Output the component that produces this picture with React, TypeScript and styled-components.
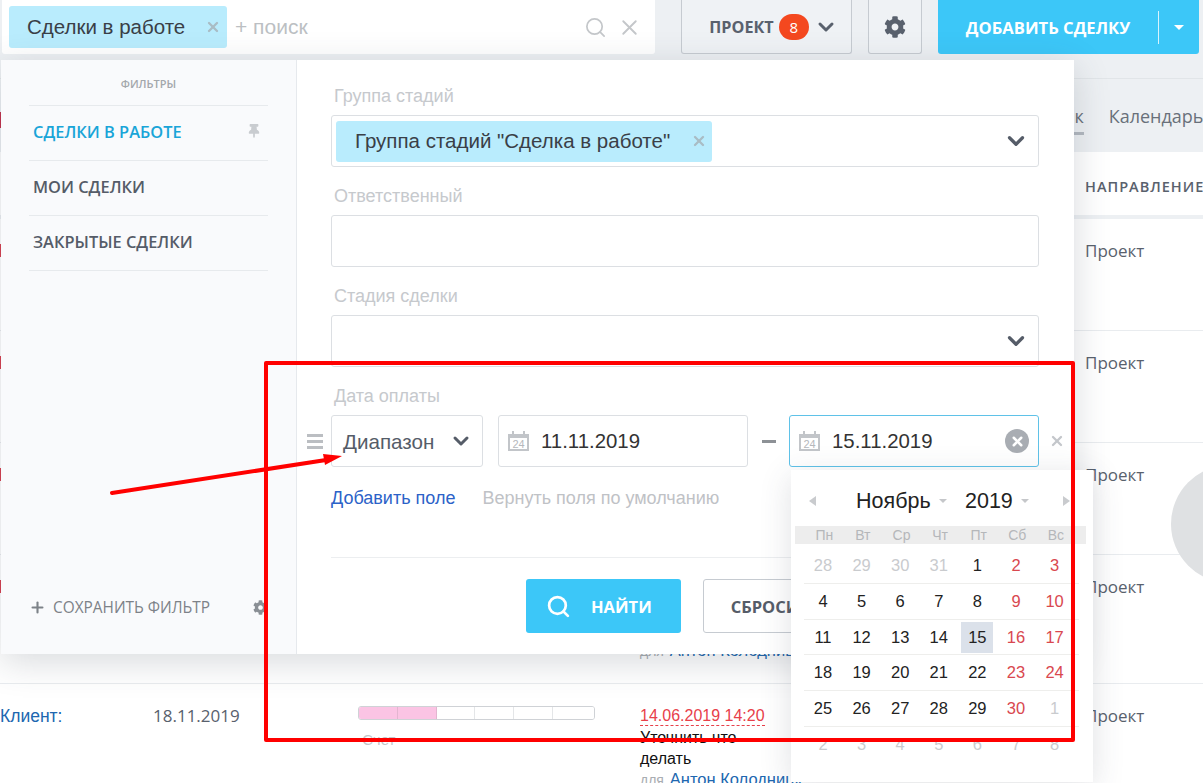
import React from 'react'
import styled, { createGlobalStyle } from 'styled-components'
import { FaCog, FaThumbtack } from 'react-icons/fa'
import { ChevronDown, Plus, Search, X } from 'lucide-react'

const sans = `"Liberation Sans", Arial, sans-serif`
const open = `"Open Sans", "Noto Sans", sans-serif`

const GlobalStyle = createGlobalStyle`
    html, body {
        margin: 0;
        padding: 0;
        background: #fff;
        overflow: hidden;
    }
    * {
        box-sizing: border-box;
    }
`

const Page = styled.div`
    position: relative;
    width: 1203px;
    height: 783px;
    overflow: hidden;
    background: #fff;
    font-family: ${sans};
`

const TopBar = styled.div`
    display: flex;
    height: 79px;
    padding: 0 4px 0 2px;
    gap: 16px;
    background: #edf0f3;
    border-bottom: 1px solid #e1e5e8;
`

const SearchBox = styled.div`
    display: flex;
    align-items: center;
    width: 653px;
    height: 54px;
    margin-right: 10px;
    padding: 0 13px 0 7px;
    background: #fff;
    border-radius: 0 0 3px 3px;
`

const Chip = styled.div<{ $big?: boolean }>`
    display: flex;
    align-items: center;
    justify-content: space-between;
    width: ${({ $big }) => ($big ? '376px' : '218px')};
    height: ${({ $big }) => ($big ? '41px' : '42px')};
    padding: ${({ $big }) => ($big ? '0 5px 0 19px' : '0 6px 0 18px')};
    background: #b9ecfd;
    border-radius: 3px;
    color: #3a3f47;
    font-size: 20.5px;
`

const SmallX = styled(X)`
    color: #a9bcc5;
`

const SearchHint = styled.span`
    flex: 1;
    margin-left: 8px;
    color: #bcbfc3;
    font-size: 21px;
`

const SearchIcons = styled.div`
    display: flex;
    align-items: center;
    gap: 10px;
    color: #c4c7ca;
`

const GreyButton = styled.div<{ $w: number }>`
    display: flex;
    align-items: center;
    justify-content: center;
    width: ${({ $w }) => $w}px;
    height: 54px;
    background: #eff2f5;
    border: 1px solid #c6cbd1;
    border-top: 0;
    border-radius: 0 0 3px 3px;
    color: #59616d;
    font-family: ${open};
    font-size: 16.2px;
    font-weight: 700;
`

const ProjectButton = styled(GreyButton)`
    padding-left: 14px;
`

const Badge = styled.span`
    display: flex;
    align-items: center;
    justify-content: center;
    width: 30px;
    height: 26px;
    margin: 0 5px;
    background: #f4481f;
    border-radius: 13px;
    color: #fff;
    font-size: 15px;
    font-weight: 400;
`

const AddButton = styled.div`
    display: flex;
    align-items: center;
    width: 261px;
    height: 54px;
    background: #3cc7f8;
    border-radius: 0 0 3px 3px;
    color: #fff;
    font-family: ${open};
    font-size: 16.6px;
    font-weight: 700;
`

const AddLabel = styled.span`
    width: 220px;
    text-align: center;
`

const AddSplit = styled.span`
    display: flex;
    align-items: center;
    justify-content: center;
    flex: 1;
    height: 33px;
    border-left: 1px solid #d8f3fd;
`

const Caret = styled.i<{ $size?: number; $color?: string }>`
    display: inline-block;
    border-left: ${({ $size = 5 }) => $size}px solid transparent;
    border-right: ${({ $size = 5 }) => $size}px solid transparent;
    border-top: ${({ $size = 5 }) => $size}px solid ${({ $color = '#fff' }) => $color};
`

const Tabs = styled.div`
    position: relative;
    display: flex;
    align-items: center;
    gap: 25px;
    height: 73px;
    padding: 0 0 0 1021px;
    background: #edf0f3;
    color: #69707a;
    font-family: ${open};
    font-size: 18px;
    white-space: nowrap;
    &::before {
        content: '';
        position: absolute;
        left: 0;
        top: 33px;
        width: 1px;
        height: 16px;
        background: #c4314b;
    }
`

const Tab = styled.span<{ $active?: boolean }>`
    position: relative;
    &::after {
        content: '';
        display: ${({ $active }) => ($active ? 'block' : 'none')};
        position: absolute;
        left: 0;
        right: 0;
        bottom: -7px;
        height: 3px;
        background: #b3b9c0;
    }
`

const TableHead = styled.div`
    height: 67px;
    padding: 25px 0 0 1085px;
    border-bottom: 4px solid #edf0f3;
    color: #59616d;
    font-family: ${open};
    font-size: 14.5px;
    font-weight: 600;
    letter-spacing: 1px;
    white-space: nowrap;
`

const Row = styled.div<{ $h: number; $mark?: boolean }>`
    position: relative;
    display: grid;
    grid-template-columns: 153px 205px 282px 445px 118px;
    height: ${({ $h }) => $h}px;
    padding-top: 22px;
    border-bottom: 1px solid #e9ecef;
    font-size: 16px;
    &::before {
        content: '';
        display: ${({ $mark }) => ($mark ? 'block' : 'none')};
        position: absolute;
        left: 0;
        top: 25px;
        width: 1px;
        height: 13px;
        background: #d8404f;
    }
`

const ClientCell = styled.div`
    color: #2067b0;
    font-size: 17.5px;
    line-height: 20px;
    white-space: nowrap;
`

const DateCell = styled.div`
    color: #59616d;
    font-family: ${open};
    font-size: 17px;
    line-height: 20px;
`

const StageCell = styled.div`
    color: #c3c6ca;
    font-size: 15px;
`

const Stages = styled.div`
    display: flex;
    width: 237px;
    height: 14px;
    margin-bottom: 11px;
    overflow: hidden;
    background: #fff;
    border: 1px solid #cfd2d6;
    border-radius: 3px;
`

const Stage = styled.span<{ $on?: boolean }>`
    flex: 0 0 38.8px;
    background: ${({ $on }) => ($on ? '#fbc4e4' : '#fff')};
    border-right: 1px solid ${({ $on }) => ($on ? '#e3b5d0' : '#e4e6e8')};
    &:last-child {
        flex: 1;
        border-right: 0;
    }
`

const TaskCell = styled.div`
    display: flex;
    flex-direction: column;
    align-items: flex-start;
    color: #111;
    font-size: 16px;
    line-height: 21px;
`

const TaskDate = styled.span`
    margin-bottom: 1px;
    color: #e8404a;
    line-height: 19px;
    border-bottom: 1px dashed #e8404a;
`

const TaskText = styled.span`
    width: 130px;
`

const TaskOwner = styled.span`
    color: #a9adb2;
    font-size: 14px;
    white-space: nowrap;
    & a {
        margin-left: 2px;
        color: #2067b0;
        font-size: 16.5px;
    }
`

const DirectionCell = styled.div`
    color: #59616d;
    font-family: ${open};
    font-size: 17px;
    line-height: 20px;
`

const Circle = styled.div`
    position: absolute;
    left: 1171px;
    top: 465px;
    width: 118px;
    height: 118px;
    background: #dfe1e3;
    border-radius: 50%;
`

const FilterPopup = styled.div`
    position: absolute;
    left: 1px;
    top: 60px;
    display: flex;
    width: 1073px;
    height: 594px;
    background: #fff;
    box-shadow: 0 8px 34px rgba(60, 70, 85, 0.2);
`

const Sidebar = styled.div`
    display: flex;
    flex: 0 0 296px;
    flex-direction: column;
    padding: 0 28px;
    background: #f9fafc;
    border-right: 1px solid #e6e9ed;
`

const SidebarTitle = styled.div`
    height: 46px;
    border-bottom: 1px solid #e7eaed;
    color: #a3a7ab;
    font-family: ${open};
    font-size: 11px;
    font-weight: 600;
    line-height: 48px;
    text-align: center;
`

const FilterItem = styled.div<{ $active?: boolean }>`
    display: flex;
    align-items: center;
    justify-content: space-between;
    height: 55px;
    padding: 0 7px 4px 4px;
    border-bottom: 1px solid #e7eaed;
    color: ${({ $active }) => ($active ? '#1aa5d8' : '#555c68')};
    font-family: ${open};
    font-size: 16.4px;
    font-weight: 600;
`

const PinIcon = styled(FaThumbtack)`
    color: #c9ccd0;
    font-size: 14px;
`

const SaveFilter = styled.div`
    display: flex;
    align-items: center;
    margin-top: auto;
    height: 94px;
    color: #7d8288;
    font-family: ${open};
    font-size: 15.4px;
`

const SaveLabel = styled.span`
    flex: 1;
    margin-left: 7px;
`

const SaveGear = styled(FaCog)`
    color: #8a8f95;
    font-size: 15px;
`

const FilterMain = styled.div`
    display: flex;
    flex-direction: column;
    flex: 1;
    min-width: 0;
    padding: 7px 35px 0 34px;
`

const Field = styled.div`
    display: flex;
    flex-direction: column;
    flex-shrink: 0;
    height: 100px;
`

const Label = styled.div`
    flex-shrink: 0;
    height: 48px;
    padding: 19px 0 0 3px;
    color: #c6c9cd;
    font-size: 18px;
    line-height: 20px;
`

const InputBox = styled.div<{ $focus?: boolean; $w?: number }>`
    position: relative;
    display: flex;
    flex-shrink: 0;
    align-items: center;
    justify-content: space-between;
    width: ${({ $w }) => ($w ? `${$w}px` : '100%')};
    height: 52px;
    padding: 0 4px;
    background: #fff;
    border: 1px solid ${({ $focus }) => ($focus ? '#5fc2e8' : '#dcdfe3')};
    border-radius: 3px;
`

const Chevron = styled(ChevronDown)`
    margin-right: 5px;
    color: #555c68;
    flex-shrink: 0;
`

const DateRow = styled.div`
    display: flex;
    flex-shrink: 0;
    align-items: center;
    height: 52px;
    margin-left: -24px;
`

const Handle = styled.div`
    display: flex;
    flex-direction: column;
    gap: 3px;
    width: 24px;
    & i {
        display: block;
        width: 16px;
        height: 3px;
        background: #bbbec2;
    }
`

const RangeValue = styled.span`
    margin-left: 7px;
    padding-top: 1px;
    color: #555c68;
    font-size: 20.6px;
`

const DateValue = styled.span`
    flex: 1;
    margin-left: 11px;
    padding-top: 1px;
    color: #333;
    font-size: 20.4px;
`

const Dash = styled.span`
    width: 14px;
    height: 3px;
    margin: 0 13px 0 14px;
    background: #8d9196;
`

const ClearDate = styled.span`
    display: flex;
    align-items: center;
    justify-content: center;
    width: 24px;
    height: 24px;
    margin-right: 5px;
    background: #a9adb3;
    border-radius: 50%;
    color: #fff;
`

const RowClose = styled(X)`
    flex-shrink: 0;
    margin: 0 -26px 0 10px;
    color: #c4c7cb;
`

const LinkRow = styled.div`
    display: flex;
    gap: 27px;
    margin-top: 21px;
    font-size: 18px;
    line-height: 20px;
`

const Link = styled.a<{ $muted?: boolean }>`
    color: ${({ $muted }) => ($muted ? '#bfc2c6' : '#2b62c8')};
`

const Actions = styled.div`
    display: flex;
    justify-content: center;
    gap: 22px;
    margin-top: 49px;
    padding-top: 21px;
    border-top: 1px solid #eceef0;
`

const ActionButton = styled.div<{ $primary?: boolean }>`
    display: flex;
    align-items: center;
    justify-content: ${({ $primary }) => ($primary ? 'flex-start' : 'center')};
    gap: 20px;
    width: ${({ $primary }) => ($primary ? '155px' : '141px')};
    height: 54px;
    padding-left: ${({ $primary }) => ($primary ? '20px' : '3px')};
    background: ${({ $primary }) => ($primary ? '#3cc7f8' : '#fff')};
    border: ${({ $primary }) => ($primary ? '0' : '1px solid #c6cbd1')};
    border-radius: 3px;
    color: ${({ $primary }) => ($primary ? '#fff' : '#555c68')};
    font-family: ${open};
    font-size: 16.5px;
    font-weight: 700;
`

const Calendar = styled.div`
    position: absolute;
    left: 1px;
    top: 54px;
    width: 302px;
    height: 312px;
    padding-top: 16px;
    background: #fff;
    box-shadow: 0 6px 30px rgba(60, 70, 85, 0.16);
    z-index: 2;
`

const CalendarHead = styled.div`
    display: flex;
    align-items: center;
    height: 30px;
    padding: 0 23px 0 18px;
    color: #222;
    font-size: 21.5px;
`

const MonthArrow = styled.i<{ $right?: boolean }>`
    border-top: 5px solid transparent;
    border-bottom: 5px solid transparent;
    border-${({ $right }) => ($right ? 'left' : 'right')}: 7px solid #c9cbce;
`

const MonthPick = styled.span<{ $w: number }>`
    display: flex;
    align-items: center;
    gap: 8px;
    width: ${({ $w }) => $w}px;
    &:first-of-type {
        margin-left: 40px;
    }
`

const Spacer = styled.span`
    flex: 1;
`

const WeekDays = styled.div`
    display: grid;
    grid-template-columns: repeat(7, 38.6px);
    align-items: center;
    height: 18px;
    margin: 10px 7px 4px 4px;
    padding-left: 10px;
    background: #ededed;
    color: #b5b7ba;
    font-size: 14px;
    text-align: center;
`

const Week = styled.div`
    display: grid;
    grid-template-columns: repeat(7, 38.6px);
    width: 275px;
    height: 35.8px;
    margin-left: 13px;
    border-bottom: 1px solid #eeeeec;
    &:last-child {
        border-bottom: 0;
    }
`

const Day = styled.div<{ $tone: string; $picked?: boolean }>`
    display: flex;
    align-items: center;
    justify-content: center;
    width: 32px;
    height: 31px;
    margin: 2px 0 0 3px;
    background: ${({ $picked }) => ($picked ? '#dbe1ea' : 'transparent')};
    color: ${({ $tone }) => $tone};
    font-size: 16.5px;
`

const RedFrame = styled.div`
    position: absolute;
    left: 264px;
    top: 361px;
    width: 811px;
    height: 381px;
    border: 4px solid #ff0000;
    border-radius: 2px;
    z-index: 5;
`

const ArrowMark = styled.svg`
    position: absolute;
    left: 100px;
    top: 445px;
    z-index: 6;
`

const CalendarGlyph = styled.svg`
    flex-shrink: 0;
    margin-left: 4px;
`

const CalendarIcon = () => (
    <CalendarGlyph width="23" height="21" viewBox="0 0 23 21">
        <path d="M1 3h21v17H1z" fill="#c2c5c9" />
        <path d="M3 7h17v11H3z" fill="#fff" />
        <path d="M5 0h2v5H5zM16 0h2v5h-2z" fill="#c2c5c9" />
        <text x="11.5" y="16.5" fontSize="11" textAnchor="middle" fill="#b5b8bc" fontFamily={sans}>24</text>
    </CalendarGlyph>
)

const RED = '#d9484f'
const DIM = '#c9cbce'
const INK = '#222'

const weeks: { d: number; dim?: boolean }[][] = [
    [{ d: 28, dim: true }, { d: 29, dim: true }, { d: 30, dim: true }, { d: 31, dim: true }, { d: 1 }, { d: 2 }, { d: 3 }],
    [{ d: 4 }, { d: 5 }, { d: 6 }, { d: 7 }, { d: 8 }, { d: 9 }, { d: 10 }],
    [{ d: 11 }, { d: 12 }, { d: 13 }, { d: 14 }, { d: 15 }, { d: 16 }, { d: 17 }],
    [{ d: 18 }, { d: 19 }, { d: 20 }, { d: 21 }, { d: 22 }, { d: 23 }, { d: 24 }],
    [{ d: 25 }, { d: 26 }, { d: 27 }, { d: 28 }, { d: 29 }, { d: 30 }, { d: 1, dim: true }],
    [2, 3, 4, 5, 6, 7, 8].map((d) => ({ d, dim: true }))
]

const Task = () => (
    <TaskCell>
        <TaskDate>14.06.2019 14:20</TaskDate>
        <TaskText>Уточнить что делать</TaskText>
        <TaskOwner>для <a>Антон Колодницк...</a></TaskOwner>
    </TaskCell>
)

const StageBar = () => (
    <StageCell>
        <Stages>
            <Stage $on />
            <Stage $on />
            <Stage />
            <Stage />
            <Stage />
            <Stage />
        </Stages>
        &nbsp;Счет
    </StageCell>
)

export default function App() {
    return (
        <Page>
            <GlobalStyle />
            <TopBar>
                <SearchBox>
                    <Chip>
                        Сделки в работе
                        <SmallX size={16} strokeWidth={3.5} />
                    </Chip>
                    <SearchHint>+ поиск</SearchHint>
                    <SearchIcons>
                        <Search size={23} strokeWidth={1.8} />
                        <X size={25} strokeWidth={1.8} />
                    </SearchIcons>
                </SearchBox>
                <ProjectButton $w={171}>
                    ПРОЕКТ
                    <Badge>8</Badge>
                    <ChevronDown size={24} strokeWidth={3} />
                </ProjectButton>
                <GreyButton $w={54}>
                    <FaCog size={22} />
                </GreyButton>
                <AddButton>
                    <AddLabel>ДОБАВИТЬ СДЕЛКУ</AddLabel>
                    <AddSplit>
                        <Caret />
                    </AddSplit>
                </AddButton>
            </TopBar>
            <Tabs>
                <Tab $active>Список</Tab>
                <Tab>Календарь</Tab>
            </Tabs>
            <TableHead>НАПРАВЛЕНИЕ</TableHead>
            <Row $h={112} $mark>
                <ClientCell />
                <DateCell />
                <span />
                <span />
                <DirectionCell>Проект</DirectionCell>
            </Row>
            <Row $h={112} $mark>
                <ClientCell />
                <DateCell />
                <span />
                <span />
                <DirectionCell>Проект</DirectionCell>
            </Row>
            <Row $h={112} $mark>
                <ClientCell />
                <DateCell />
                <span />
                <span />
                <DirectionCell>Проект</DirectionCell>
            </Row>
            <Row $h={129} $mark>
                <ClientCell />
                <DateCell />
                <span />
                <Task />
                <DirectionCell>Проект</DirectionCell>
            </Row>
            <Row $h={129}>
                <ClientCell>Клиент:</ClientCell>
                <DateCell>18.11.2019</DateCell>
                <StageBar />
                <Task />
                <DirectionCell>Проект</DirectionCell>
            </Row>
            <Circle />

            <FilterPopup>
                <Sidebar>
                    <SidebarTitle>ФИЛЬТРЫ</SidebarTitle>
                    <FilterItem $active>
                        СДЕЛКИ В РАБОТЕ
                        <PinIcon />
                    </FilterItem>
                    <FilterItem>МОИ СДЕЛКИ</FilterItem>
                    <FilterItem>ЗАКРЫТЫЕ СДЕЛКИ</FilterItem>
                    <SaveFilter>
                        <Plus size={17} strokeWidth={3} />
                        <SaveLabel>СОХРАНИТЬ ФИЛЬТР</SaveLabel>
                        <SaveGear />
                    </SaveFilter>
                </Sidebar>
                <FilterMain>
                    <Field>
                        <Label>Группа стадий</Label>
                        <InputBox>
                            <Chip $big>
                                Группа стадий "Сделка в работе"
                                <SmallX size={16} strokeWidth={3.5} />
                            </Chip>
                            <Chevron size={26} strokeWidth={3} />
                        </InputBox>
                    </Field>
                    <Field>
                        <Label>Ответственный</Label>
                        <InputBox />
                    </Field>
                    <Field>
                        <Label>Стадия сделки</Label>
                        <InputBox>
                            <span />
                            <Chevron size={26} strokeWidth={3} />
                        </InputBox>
                    </Field>
                    <Label>Дата оплаты</Label>
                    <DateRow>
                        <Handle>
                            <i />
                            <i />
                            <i />
                        </Handle>
                        <InputBox $w={152}>
                            <RangeValue>Диапазон</RangeValue>
                            <Chevron size={24} strokeWidth={3} />
                        </InputBox>
                        <Spacer />
                        <InputBox $w={250}>
                            <CalendarIcon />
                            <DateValue>11.11.2019</DateValue>
                        </InputBox>
                        <Dash />
                        <InputBox $w={250} $focus>
                            <CalendarIcon />
                            <DateValue>15.11.2019</DateValue>
                            <ClearDate>
                                <X size={15} strokeWidth={4} />
                            </ClearDate>
                            <Calendar>
                                <CalendarHead>
                                    <MonthArrow />
                                    <MonthPick $w={109}>
                                        Ноябрь
                                        <Caret $size={4} $color="#c5c7ca" />
                                    </MonthPick>
                                    <MonthPick $w={70}>
                                        2019
                                        <Caret $size={4} $color="#c5c7ca" />
                                    </MonthPick>
                                    <Spacer />
                                    <MonthArrow $right />
                                </CalendarHead>
                                <WeekDays>
                                    {['Пн', 'Вт', 'Ср', 'Чт', 'Пт', 'Сб', 'Вс'].map((w) => (
                                        <span key={w}>{w}</span>
                                    ))}
                                </WeekDays>
                                {weeks.map((week, i) => (
                                    <Week key={i}>
                                        {week.map((c, j) => (
                                            <Day
                                                key={j}
                                                $tone={c.dim ? DIM : j > 4 ? RED : INK}
                                                $picked={c.d === 15}
                                            >
                                                {c.d}
                                            </Day>
                                        ))}
                                    </Week>
                                ))}
                            </Calendar>
                        </InputBox>
                        <RowClose size={16} strokeWidth={3.5} />
                    </DateRow>
                    <LinkRow>
                        <Link>Добавить поле</Link>
                        <Link $muted>Вернуть поля по умолчанию</Link>
                    </LinkRow>
                    <Actions>
                        <ActionButton $primary>
                            <Search size={25} strokeWidth={2.6} />
                            НАЙТИ
                        </ActionButton>
                        <ActionButton>СБРОСИТЬ</ActionButton>
                    </Actions>
                </FilterMain>
            </FilterPopup>

            <RedFrame />
            <ArrowMark width="250" height="60" viewBox="0 0 250 60">
                <path d="M12 48 L226 15" stroke="#ff0000" strokeWidth="4" strokeLinecap="round" />
                <path d="M242 11 L223 9 L225 20 Z" fill="#ff0000" />
            </ArrowMark>
        </Page>
    )
}
